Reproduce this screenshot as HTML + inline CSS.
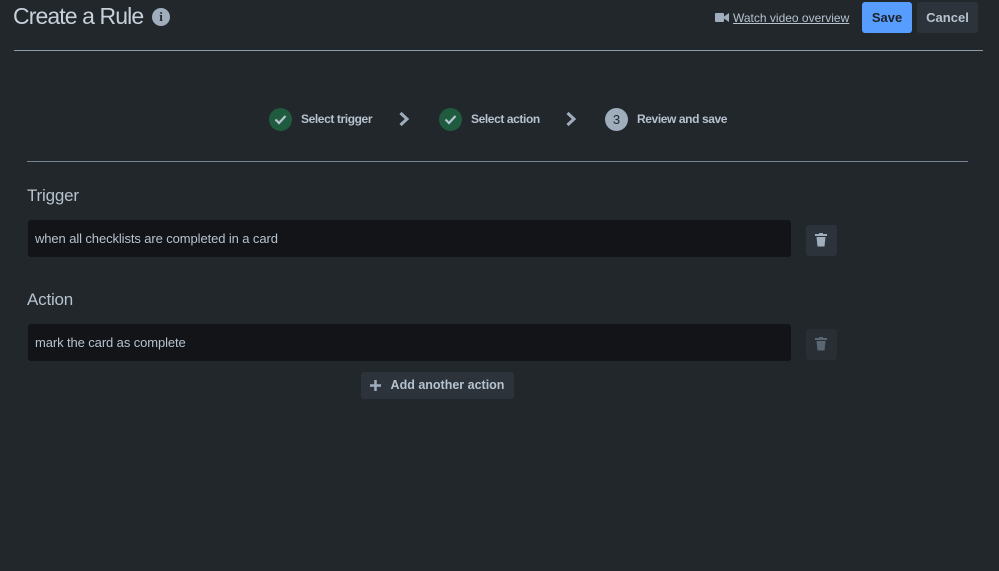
<!DOCTYPE html>
<html><head><meta charset="utf-8"><style>
*{box-sizing:border-box;margin:0;padding:0}
body{width:999px;height:571px;background:#22272b;font-family:"Liberation Sans",sans-serif;color:#b6c2cf;position:relative;overflow:hidden}
.abs{position:absolute}
h1{position:absolute;left:13px;top:3px;font-size:23px;font-weight:normal;color:#c7d1db;letter-spacing:-0.9px}
.info{position:absolute;left:152px;top:8px;width:18px;height:18px;border-radius:50%;background:#9fadbc;color:#22272b;font:bold 13px "Liberation Serif",serif;text-align:center;line-height:18px}
.hr{position:absolute;height:1px;background:#8c9bab}
.btn{position:absolute;border-radius:3px;font-weight:bold;font-size:13px;text-align:center}
.step{position:absolute;top:108px;width:23px;height:23px;border-radius:50%;background:#1f5c3f}
.steptxt{position:absolute;top:112px;font-size:12px;letter-spacing:-0.4px;font-weight:bold;color:#b6c2cf}
.lbl{position:absolute;left:27px;font-size:17px;color:#b6c2cf;letter-spacing:-0.2px}
.field{position:absolute;left:28px;width:763px;height:37px;background:#121417;border-radius:3px;font-size:13px;letter-spacing:-0.1px;color:#b6c2cf;padding:11px 7px}
.trash{position:absolute;left:806px;width:31px;height:31px;border-radius:3px;background:#2c333a}
</style></head><body>
<h1>Create a Rule</h1>
<div class="info">i</div>
<svg class="abs" style="left:715px;top:12px" width="14" height="11" viewBox="0 0 14 11"><rect x="0" y="1" width="9" height="9" rx="1" fill="#9fadbc"/><path d="M9 4.5L14 1V10L9 6.5Z" fill="#9fadbc"/></svg>
<div class="abs" style="left:733px;top:11px;font-size:12px;color:#b6c2cf;text-decoration:underline">Watch video overview</div>
<div class="btn" style="left:862px;top:2px;width:50px;height:31px;background:#579dff;color:#1d2125;line-height:31px">Save</div>
<div class="btn" style="left:917px;top:2px;width:61px;height:31px;background:#2c333a;color:#b6c2cf;line-height:31px">Cancel</div>
<div class="hr" style="left:14px;top:50px;width:969px"></div>

<div class="step" style="left:269px"></div>
<svg class="abs" style="left:274px;top:114px" width="13" height="11"><path d="M1.5 5.5L5 9L11.5 2" stroke="#b6c2cf" stroke-width="2.2" fill="none"/></svg>
<div class="steptxt" style="left:301px">Select trigger</div>
<svg class="abs" style="left:398px;top:111px" width="12" height="16"><path d="M2.5 2L9 8L2.5 14" stroke="#9fadbc" stroke-width="3" fill="none"/></svg>
<div class="step" style="left:439px"></div>
<svg class="abs" style="left:444px;top:114px" width="13" height="11"><path d="M1.5 5.5L5 9L11.5 2" stroke="#b6c2cf" stroke-width="2.2" fill="none"/></svg>
<div class="steptxt" style="left:471px">Select action</div>
<svg class="abs" style="left:565px;top:111px" width="12" height="16"><path d="M2.5 2L9 8L2.5 14" stroke="#9fadbc" stroke-width="3" fill="none"/></svg>
<div class="step" style="left:605px;background:#9fadbc;color:#22272b;font-size:13px;text-align:center;line-height:23px">3</div>
<div class="steptxt" style="left:637px">Review and save</div>
<div class="hr" style="left:27px;top:161px;width:941px;background:#738496"></div>

<div class="lbl" style="top:186px">Trigger</div>
<div class="field" style="top:220px">when all checklists are completed in a card</div>
<div class="trash" style="top:225px"></div>
<svg class="abs" style="left:815px;top:233px" width="12" height="14"><rect x="0" y="1" width="12" height="2" fill="#9fadbc"/><rect x="4" y="0" width="4" height="2" fill="#9fadbc"/><path d="M1.5 4H10.5L9.5 13.5H2.5Z" fill="#9fadbc"/></svg>

<div class="lbl" style="top:290px">Action</div>
<div class="field" style="top:324px">mark the card as complete</div>
<div class="trash" style="top:329px;background:#282e33"></div>
<svg class="abs" style="left:815px;top:337px" width="12" height="14"><rect x="0" y="1" width="12" height="2" fill="#596773"/><rect x="4" y="0" width="4" height="2" fill="#596773"/><path d="M1.5 4H10.5L9.5 13.5H2.5Z" fill="#596773"/></svg>

<div class="btn" style="left:361px;top:372px;width:153px;height:27px;background:#2c333a;color:#b6c2cf;line-height:27px;padding-left:20px;font-size:12.5px">Add another action</div>
<svg class="abs" style="left:370px;top:380px" width="11" height="11"><path d="M5.5 0V11M0 5.5H11" stroke="#9fadbc" stroke-width="2.5"/></svg>
</body></html>
